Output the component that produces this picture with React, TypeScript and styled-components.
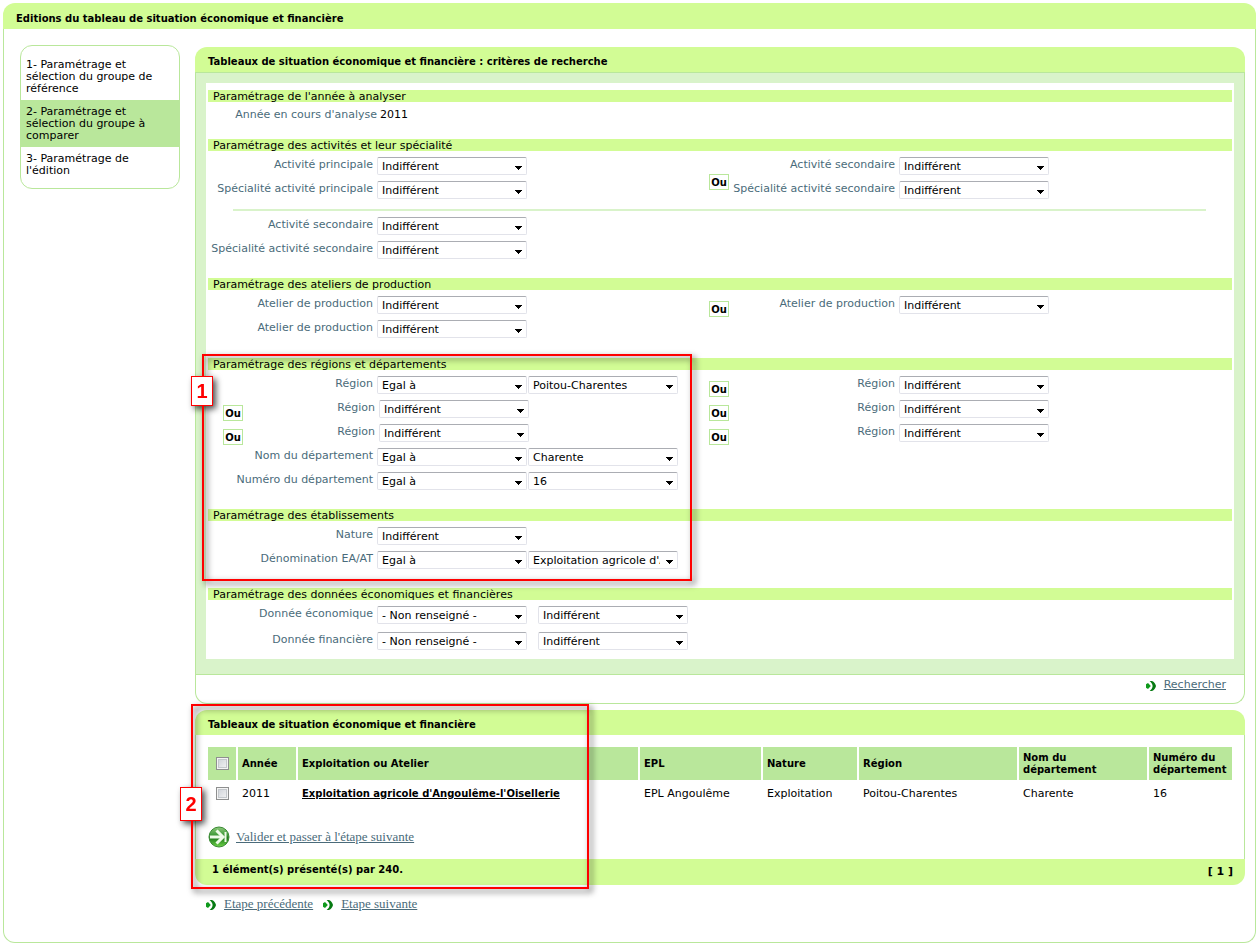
import React, { useId } from 'react';
import styled, { createGlobalStyle } from 'styled-components';

const lime = '#d2fc95';
const leaf = '#b9e79b';
const mist = '#d9f3ca';
const slate = '#4a6b7a';

const Global = createGlobalStyle`
  *, *::before, *::after { box-sizing: border-box; }
  body {
    margin: 0;
    background: #fff;
    color: #000;
    font: 11px/12px Verdana, 'DejaVu Sans', sans-serif;
  }
`;

const Card = styled.div`
  margin: 3px 4px 3px 3px;
`;

const CardTitle = styled.h1`
  margin: 0;
  padding: 10px 13px 4px;
  background: ${lime};
  border-radius: 12px 12px 0 0;
  font-size: 10px;
  line-height: 12px;
`;

const CardBody = styled.div`
  display: flex;
  align-items: flex-start;
  gap: 15px;
  padding: 16px 10px 25px 16px;
  border: 1px solid ${leaf};
  border-top: 0;
  border-radius: 0 0 12px 12px;
`;

const Steps = styled.nav`
  flex: 0 0 160px;
  padding: 7px 0 6px;
  border: 1px solid ${leaf};
  border-radius: 12px;
`;

const StepLink = styled.a<{ $current?: boolean }>`
  display: block;
  padding: 6px 20px 5px 5px;
  color: #000;
  text-decoration: none;
  background: ${(p) => (p.$current ? leaf : 'transparent')};
`;

const Main = styled.main`
  flex: 1;
  min-width: 0;
  padding-top: 2px;
`;

const Panel = styled.section`
  position: relative;
  margin-bottom: 6px;
`;

const PanelTitle = styled.h2`
  margin: 0;
  padding: 9px 13px 4px;
  background: ${lime};
  border-radius: 12px 12px 0 0;
  font-size: 10px;
  line-height: 12px;
`;

const FormArea = styled.div`
  padding: 10px 10px 15px;
  background: ${mist};
  border: 1px solid ${leaf};
`;

const FormSheet = styled.div`
  padding: 7px 2px 9px;
  background: #fff;
`;

const PanelActions = styled.div`
  display: flex;
  justify-content: flex-end;
  align-items: flex-start;
  height: 29px;
  padding: 4px 18px 0;
  border: 1px solid ${leaf};
  border-top: 0;
  border-radius: 0 0 12px 12px;
`;

const Group = styled.div<{ $after?: number }>`
  margin-bottom: ${(p) => p.$after ?? 19}px;
`;

const GroupTitle = styled.h3`
  margin: 0 0 6px;
  padding: 1px 5px 0;
  height: 12px;
  background: ${lime};
  font-size: 11px;
  font-weight: 400;
  line-height: 12px;
`;

const Halves = styled.div`
  display: grid;
  grid-template-columns: minmax(0, 501fr) minmax(0, 523fr);
  align-items: start;
`;

const Rows = styled.div<{ $gap?: number }>`
  display: grid;
  gap: ${(p) => p.$gap ?? 6}px;
`;

const Row = styled.div`
  display: flex;
  align-items: flex-start;
  height: 18px;
`;

const YearRow = styled.div`
  display: flex;
  gap: 3px;
  height: 12px;
  line-height: 14px;
`;

const Label = styled.label<{ $width: number }>`
  flex: 0 0 ${(p) => p.$width}px;
  color: ${slate};
  line-height: 16px;
  text-align: right;
  white-space: nowrap;
`;

const YearLabel = styled.span`
  flex: 0 0 169px;
  color: ${slate};
  text-align: right;
`;

const OrBox = styled.span<{ $indent?: boolean }>`
  flex: 0 0 20px;
  height: 16px;
  margin: 5px 0 -3px ${(p) => (p.$indent ? 15 : 0)}px;
  border: 1px solid ${leaf};
  background: #fff;
  font-size: 10px;
  font-weight: 700;
  line-height: 15px;
  text-align: center;
`;

const OrGroup = styled.div`
  display: flex;
  align-items: center;
`;

const SelectFrame = styled.span<{ $gap: number }>`
  display: inline-grid;
  grid-template-columns: 150px;
  margin-left: ${(p) => p.$gap}px;

  > * { grid-area: 1 / 1; }

  svg {
    align-self: center;
    justify-self: end;
    margin: 3px 5px 0 0;
    pointer-events: none;
  }
`;

const SelectBox = styled.select`
  appearance: none;
  width: 150px;
  height: 18px;
  margin: 0;
  padding: 1px 17px 0 4px;
  border: 1px solid #e2e3ea;
  border-top-color: #abadb3;
  border-radius: 2px;
  background: #fff;
  color: #000;
  font: inherit;
`;

const Rule = styled.hr`
  height: 2px;
  margin: 10px 26px 6px 25px;
  border: 0;
  background: ${mist};
`;

const TextLink = styled.a<{ $serif?: boolean }>`
  color: ${slate};
  font: ${(p) => (p.$serif ? "13px/14px 'Liberation Serif', 'Times New Roman', serif" : 'inherit')};
`;

const ArrowLink = styled.span`
  display: inline-flex;
  align-items: center;
  gap: 8px;

  svg { margin-top: 2px; }
`;

const ResultBody = styled.div`
  padding: 12px 12px 11px;
  border: 1px solid ${leaf};
  border-width: 0 1px;
`;

const Results = styled.table`
  width: 100%;
  table-layout: fixed;
  border-collapse: separate;
  border-spacing: 0;
`;

const HeadCell = styled.th<{ $width?: number }>`
  width: ${(p) => (p.$width ? `${p.$width}px` : 'auto')};
  height: 33px;
  padding: 0 4px;
  background: ${leaf};
  background-clip: padding-box;
  border-right: 2px solid #fff;
  font-size: 10px;
  line-height: 12px;
  text-align: left;

  &:last-child { border-right: 0; }
`;

const Cell = styled.td`
  height: 27px;
  padding: 0 6px 0 4px;
`;

const RecordLink = styled.a`
  color: #000;
  font-size: 10px;
  font-weight: 700;
`;

const Tick = styled.input`
  appearance: none;
  display: block;
  width: 13px;
  height: 13px;
  margin: 0 0 0 4px;
  border: 1px solid #8e8f8f;
  background: linear-gradient(135deg, #cbcfd5, #f6f6f6);
  box-shadow: inset 0 0 0 1px #f4f4f4, inset 0 0 0 2px #c4c8cc;
`;

const Validate = styled.div`
  display: flex;
  align-items: center;
  gap: 6px;
  padding-top: 19px;
`;

const ResultFoot = styled.div`
  display: flex;
  justify-content: space-between;
  height: 26px;
  padding: 5px 12px 0 17px;
  background: ${lime};
  border-radius: 0 0 12px 12px;
  font-size: 10px;
  font-weight: 700;
`;

const Page = styled.span`
  padding-top: 2px;
  font-size: 11px;
`;

const StepNav = styled.div`
  display: flex;
  gap: 10px;
  padding: 6px 11px;
`;

/* Numbered call-outs of the user guide, laid over the form. */
const Frame = styled.div`
  position: absolute;
  z-index: 1;
  border: 2px solid #f00;
  filter: drop-shadow(3px 3px 3px rgba(0, 0, 0, 0.7));
  pointer-events: none;
`;

const FilterFrame = styled(Frame)`
  inset: -4px auto -12px -6px;
  width: 490px;
`;

const ResultFrame = styled(Frame)`
  inset: -6px auto -4px -4px;
  width: 398px;
`;

const Callout = styled.span<{ $top: number; $height: number }>`
  position: absolute;
  top: ${(p) => p.$top}px;
  left: -13px;
  width: 22px;
  height: ${(p) => p.$height}px;
  border: 1px solid #f00;
  background: #fff;
  color: #f00;
  font: bold 20px 'Liberation Sans', Arial, sans-serif;
  line-height: ${(p) => p.$height - 2}px;
  text-align: center;
`;

const Marked = styled.div`
  position: relative;
  margin-bottom: 19px;
`;

function Dropdown({ id, value, gap = 4, label }: { id?: string; value: string; gap?: number; label?: string }) {
  return (
    <SelectFrame $gap={gap}>
      <SelectBox id={id} aria-label={label} defaultValue={value}>
        <option>{value}</option>
      </SelectBox>
      <svg width="7" height="4" viewBox="0 0 7 4" shapeRendering="crispEdges" aria-hidden="true">
        <path d="M0 0h7v1H6v1H5v1H4v1H3V3H2V2H1V1H0z" />
      </svg>
    </SelectFrame>
  );
}

type FieldProps = {
  label: string;
  value?: string;
  second?: string;
  secondGap?: number;
  or?: boolean;
  width?: number;
};

function Field({ label, value = 'Indifférent', second, secondGap = 1, or, width = 165 }: FieldProps) {
  const id = useId();
  return (
    <Row>
      {or && <OrBox $indent>Ou</OrBox>}
      <Label htmlFor={id} $width={or ? 132 : width}>{label}</Label>
      <Dropdown id={id} value={value} />
      {second && <Dropdown value={second} gap={secondGap} label={`${label} : valeur`} />}
    </Row>
  );
}

function OrFields({ labels }: { labels: string[] }) {
  return (
    <OrGroup>
      <OrBox>Ou</OrBox>
      <Rows>
        {labels.map((label) => <Field key={label} label={label} width={166} />)}
      </Rows>
    </OrGroup>
  );
}

function Chevron() {
  return (
    <svg width="10" height="10" viewBox="0 0 10 10" aria-hidden="true">
      <path d="M0 3.2 2 2l2.8 3L2 8 0 6.8z" fill="#0f9a1c" />
      <path d="M3.6 0H6c2 .8 3.6 2.800 4 5-.4 2.200-2 4.200-4 5H3.600C5 9 6.600 7 6.600 5S5 1 3.600 0z" fill="#067a12" />
    </svg>
  );
}

function GoBall() {
  return (
    <svg width="22" height="22" viewBox="0 0 22 22" aria-hidden="true">
      <defs>
        <linearGradient id="ball" x1="0" y1="0" x2="0" y2="1">
          <stop offset="0" stopColor="#8fca7c" />
          <stop offset="0.4" stopColor="#3f9a38" />
          <stop offset="0.55" stopColor="#1f7a1c" />
          <stop offset="1" stopColor="#6fd548" />
        </linearGradient>
      </defs>
      <circle cx="11" cy="11" r="10" fill="url(#ball)" stroke="#3a8a34" />
      <path d="M2 11h11" fill="none" stroke="#eefbe8" strokeWidth="3" />
      <path d="M8.500 4.500 15 11l-6.500 6.500" fill="none" stroke="#eefbe8" strokeWidth="3" />
      <path d="M17.500 6v10" fill="none" stroke="#eefbe8" strokeWidth="2" />
    </svg>
  );
}

const columns: [string, number?][] = [
  ['Année', 60],
  ['Exploitation ou Atelier'],
  ['EPL', 123],
  ['Nature', 96],
  ['Région', 160],
  ['Nom du département', 130],
  ['Numéro du département', 83],
];

export default function App() {
  return (
    <>
      <Global />
      <Card>
        <CardTitle>Editions du tableau de situation économique et financière</CardTitle>
        <CardBody>
          <Steps aria-label="Etapes">
            <StepLink href="#etape1">1- Paramétrage et sélection du groupe de référence</StepLink>
            <StepLink href="#etape2" $current>2- Paramétrage et sélection du groupe à comparer</StepLink>
            <StepLink href="#etape3">3- Paramétrage de l'édition</StepLink>
          </Steps>
          <Main>
            <Panel>
              <PanelTitle>Tableaux de situation économique et financière : critères de recherche</PanelTitle>
              <FormArea>
                <FormSheet>
                  <Group>
                    <GroupTitle>Paramétrage de l'année à analyser</GroupTitle>
                    <YearRow>
                      <YearLabel>Année en cours d'analyse</YearLabel>
                      <span>2011</span>
                    </YearRow>
                  </Group>
                  <Group>
                    <GroupTitle>Paramétrage des activités et leur spécialité</GroupTitle>
                    <Halves>
                      <Rows>
                        <Field label="Activité principale" />
                        <Field label="Spécialité activité principale" />
                      </Rows>
                      <OrFields labels={['Activité secondaire', 'Spécialité activité secondaire']} />
                    </Halves>
                    <Rule />
                    <Rows>
                      <Field label="Activité secondaire" />
                      <Field label="Spécialité activité secondaire" />
                    </Rows>
                  </Group>
                  <Group $after={20}>
                    <GroupTitle>Paramétrage des ateliers de production</GroupTitle>
                    <Halves>
                      <Rows>
                        <Field label="Atelier de production" />
                        <Field label="Atelier de production" />
                      </Rows>
                      <OrFields labels={['Atelier de production']} />
                    </Halves>
                  </Group>
                  <Marked>
                    <Group>
                      <GroupTitle>Paramétrage des régions et départements</GroupTitle>
                      <Halves>
                        <Rows>
                          <Field label="Région" value="Egal à" second="Poitou-Charentes" />
                          <Field or label="Région" />
                          <Field or label="Région" />
                          <Field label="Nom du département" value="Egal à" second="Charente" />
                          <Field label="Numéro du département" value="Egal à" second="16" />
                        </Rows>
                        <Rows>
                          <OrFields labels={['Région']} />
                          <OrFields labels={['Région']} />
                          <OrFields labels={['Région']} />
                        </Rows>
                      </Halves>
                    </Group>
                    <Group $after={0}>
                      <GroupTitle>Paramétrage des établissements</GroupTitle>
                      <Rows>
                        <Field label="Nature" />
                        <Field label="Dénomination EA/AT" value="Egal à" second="Exploitation agricole d'Angoulême-l'Oisellerie" />
                      </Rows>
                    </Group>
                    <FilterFrame>
                      <Callout $top={20} $height={30}>1</Callout>
                    </FilterFrame>
                  </Marked>
                  <Group $after={0}>
                    <GroupTitle>Paramétrage des données économiques et financières</GroupTitle>
                    <Rows $gap={8}>
                      <Field label="Donnée économique" value="- Non renseigné -" second="Indifférent" secondGap={11} />
                      <Field label="Donnée financière" value="- Non renseigné -" second="Indifférent" secondGap={11} />
                    </Rows>
                  </Group>
                </FormSheet>
              </FormArea>
              <PanelActions>
                <ArrowLink>
                  <Chevron />
                  <TextLink href="#rechercher">Rechercher</TextLink>
                </ArrowLink>
              </PanelActions>
            </Panel>

            <Panel>
              <PanelTitle>Tableaux de situation économique et financière</PanelTitle>
              <ResultBody>
                <Results>
                  <thead>
                    <tr>
                      <HeadCell $width={30}><Tick type="checkbox" aria-label="Tout sélectionner" /></HeadCell>
                      {columns.map(([name, width]) => (
                        <HeadCell key={name} $width={width}>{name}</HeadCell>
                      ))}
                    </tr>
                  </thead>
                  <tbody>
                    <tr>
                      <Cell><Tick type="checkbox" aria-label="Sélectionner Exploitation agricole d'Angoulême-l'Oisellerie" /></Cell>
                      <Cell>2011</Cell>
                      <Cell><RecordLink href="#exploitation">Exploitation agricole d'Angoulême-l'Oisellerie</RecordLink></Cell>
                      <Cell>EPL Angoulême</Cell>
                      <Cell>Exploitation</Cell>
                      <Cell>Poitou-Charentes</Cell>
                      <Cell>Charente</Cell>
                      <Cell>16</Cell>
                    </tr>
                  </tbody>
                </Results>
                <Validate>
                  <GoBall />
                  <TextLink $serif href="#valider">Valider et passer à l'étape suivante</TextLink>
                </Validate>
              </ResultBody>
              <ResultFoot>
                <span>1 élément(s) présenté(s) par 240.</span>
                <Page>[ 1 ]</Page>
              </ResultFoot>
              <ResultFrame>
                <Callout $top={81} $height={34}>2</Callout>
              </ResultFrame>
            </Panel>

            <StepNav>
              <ArrowLink>
                <Chevron />
                <TextLink $serif href="#precedente">Etape précédente</TextLink>
              </ArrowLink>
              <ArrowLink>
                <Chevron />
                <TextLink $serif href="#suivante">Etape suivante</TextLink>
              </ArrowLink>
            </StepNav>
          </Main>
        </CardBody>
      </Card>
    </>
  );
}
